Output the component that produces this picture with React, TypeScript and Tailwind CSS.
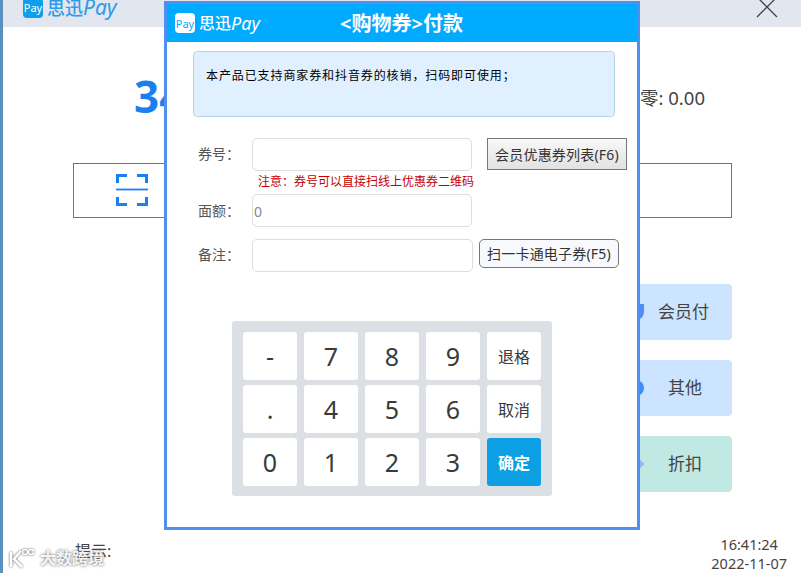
const fontStack = { fontFamily: '"Noto Sans", "Noto Sans CJK SC", sans-serif' };

const keys = ['-', '7', '8', '9', '退格', '.', '4', '5', '6', '取消', '0', '1', '2', '3', '确定'];

function PayIcon({ light }: { light?: boolean }) {
    return (
        <div className={`flex h-[20px] w-[20px] items-center justify-center rounded-[4px] ${light ? 'bg-white text-[#00aaff]' : 'bg-[#0d9fee] text-white'}`}>
            <span className="text-[11px] leading-none">Pay</span>
        </div>
    );
}

function Keypad() {
    return (
        <div className="mt-[49px] ml-[65px] grid w-[320px] grid-cols-[repeat(5,54px)] grid-rows-[repeat(3,48px)] gap-x-[7px] gap-y-[5px] rounded-[3px] bg-[#dcdfe4] pt-[11px] pr-[11px] pb-[10px] pl-[11px]">
            {keys.map((key) => {
                const isWord = key.length > 1;
                const isOk = key === '确定';
                return (
                    <div
                        key={key}
                        className={`flex items-center justify-center rounded-[3px] pt-[2px] ${isOk ? 'bg-[#0d9fe4] font-bold text-white' : 'bg-white text-[#3a3a3a]'} ${isWord ? 'text-[16px]' : 'text-[25px]'}`}
                    >
                        {key}
                    </div>
                );
            })}
        </div>
    );
}

function CouponModal() {
    return (
        <div className="absolute top-[1px] left-[164px] h-[529px] w-[476px] border-[3px] border-[#4d90f0] bg-white">
            {/* Title bar */}
            <div className="relative flex h-[38px] items-center bg-[#00aaff] pl-[8px] text-white">
                <PayIcon light />
                <span className="ml-[4px] text-[16px] leading-none font-medium">思迅</span>
                <span className="text-[18px] leading-none italic">Pay</span>
                <span className="absolute top-[5px] left-[173px] text-[20px] font-bold">&lt;购物券&gt;付款</span>
            </div>

            <div className="mt-[9px] ml-[26px] h-[66px] w-[422px] rounded-[4px] border border-[#b4d4ec] bg-[#e0f0fe] pt-[14px] pl-[12px] text-[12px] leading-[20px] tracking-[0.9px] text-black">
                本产品已支持商家券和抖音券的核销，扫码即可使用；
            </div>

            {/* Form */}
            <div className="mt-[21px] ml-[31px] text-[14px] text-[#555]">
                <div className="flex items-start">
                    <span className="mt-[6px] w-[54px] leading-[20px]">券号：</span>
                    <div className="h-[33px] w-[220px] rounded-[5px] border border-[#dddddd] bg-white" />
                    <button className="ml-[15px] h-[32px] w-[140px] border border-[#777] bg-gradient-to-b from-[#f8f8f8] to-[#e2e2e2] text-[14px] tracking-[0.2px] text-[#333]">
                        会员优惠券列表(F6)
                    </button>
                </div>
                <div className="ml-[60px] h-[23px] pt-[2px] text-[12px] leading-[18px] text-[#c40000]">
                    注意：券号可以直接扫线上优惠券二维码
                </div>
                <div className="flex items-center">
                    <span className="w-[54px]">面额：</span>
                    <div className="h-[33px] w-[220px] rounded-[5px] border border-[#dddddd] bg-white pl-[1px] text-[14px] leading-[33px] text-[#888]">0</div>
                </div>
                <div className="mt-[12px] flex items-start">
                    <span className="mt-[6px] w-[54px] leading-[20px]">备注：</span>
                    <div className="h-[33px] w-[221px] rounded-[5px] border border-[#dddddd] bg-white" />
                    <button className="ml-[6px] h-[29px] w-[140px] rounded-[5px] border border-[#777] bg-[#f7f9fc] text-[14px] tracking-[0.2px] text-[#333]">
                        扫一卡通电子券(F5)
                    </button>
                </div>
            </div>

            <Keypad />
        </div>
    );
}

function SideButton({ label, color, right, icon }: { label: string; color: string; right: string; icon: string }) {
    return (
        <div className={`flex h-[56px] w-[132px] items-center justify-between rounded-[4px] pl-[28px] text-[17px] text-[#444] ${color} ${right}`}>
            <span className={`h-[16px] w-[16px] ${icon}`} />
            <span>{label}</span>
        </div>
    );
}

export default function App() {
    return (
        <div className="relative h-[573px] w-[801px] overflow-hidden bg-white" style={fontStack}>
            <div className="flex h-full flex-col border-l-[3px] border-[#5a8fc0]">
                {/* Window header, its top is cut off by the capture */}
                <div className="flex h-[27px] items-start justify-between overflow-hidden bg-[#e2e6ef] pr-[23px] pl-[20px]">
                    <div className="-mt-[3px] flex items-center text-[#2e9be8]">
                        <PayIcon />
                        <span className="ml-[4px] text-[18px] leading-none font-medium">思迅</span>
                        <span className="text-[21px] leading-none italic">Pay</span>
                    </div>
                    <svg width="22" height="18" viewBox="0 0 22 18" fill="none" stroke="#444" strokeWidth="1.3">
                        <path d="M1 -3 L21 17 M21 -3 L1 17" />
                    </svg>
                </div>

                <div className="ml-[70px] flex w-[659px] flex-1 flex-col">
                    {/* Amount row */}
                    <div className="mt-[46px] flex h-[46px] items-center justify-between pr-[27px] pl-[61px]">
                        <span className="text-[44px] leading-none font-bold text-[#1a7ff0]">34</span>
                        <span className="mt-[4px] text-[18.5px] text-[#444]">零: 0.00</span>
                    </div>

                    {/* Scan box */}
                    <div className="mt-[44px] h-[55px] border border-[#1a8fc8] pt-[10px] pl-[42px]">
                        <svg width="32" height="32" viewBox="0 0 32 32" fill="none" stroke="#1a7ff0" strokeWidth="3">
                            <path d="M1.5 9 V1.5 H11 M21 1.5 H30.5 V9 M1.5 23 V30.5 H11 M21 30.5 H30.5 V23" />
                            <path d="M0 15.5 H32" strokeWidth="1.8" />
                        </svg>
                    </div>

                    <div className="mt-[66px] flex flex-col items-end gap-[20px]">
                        <SideButton label="会员付" color="bg-[#cce4ff]" right="pr-[23px]" icon="rounded-b-full bg-[#4d90f0]" />
                        <SideButton label="其他" color="bg-[#cce4ff]" right="pr-[30px]" icon="rounded-full bg-[#3d8ff5]" />
                        <SideButton label="折扣" color="bg-[#c0e9e3]" right="pr-[30px]" icon="rotate-45 scale-75 bg-[#9db4e8]" />
                    </div>

                    {/* Footer */}
                    <div className="mt-[43px] flex w-[714px] items-start justify-between pl-[2px]">
                        <span className="mt-[4px] text-[16px] text-[#444]">提示:</span>
                        <div className="text-center text-[14.5px] leading-[19px] text-[#444]">
                            <div>16:41:24</div>
                            <div>2022-11-07</div>
                        </div>
                    </div>
                </div>
            </div>

            <CouponModal />

            {/* Capture watermark */}
            <div className="absolute bottom-[3px] left-[8px] flex items-center gap-[5px] text-[16px] font-bold text-white/90 [text-shadow:0_0_3px_#555]">
                <svg width="27" height="20" viewBox="0 0 27 20" fill="none" stroke="#ffffff" strokeWidth="2.5" className="drop-shadow-[0_0_1px_#555]">
                    <path d="M3 4 V19 M13 3 L6 11 L14 19" />
                    <circle cx="17" cy="4" r="2.5" strokeWidth="1.4" />
                    <circle cx="23" cy="4" r="2.5" strokeWidth="1.4" />
                </svg>
                <span>大数跨境</span>
            </div>
        </div>
    );
}
